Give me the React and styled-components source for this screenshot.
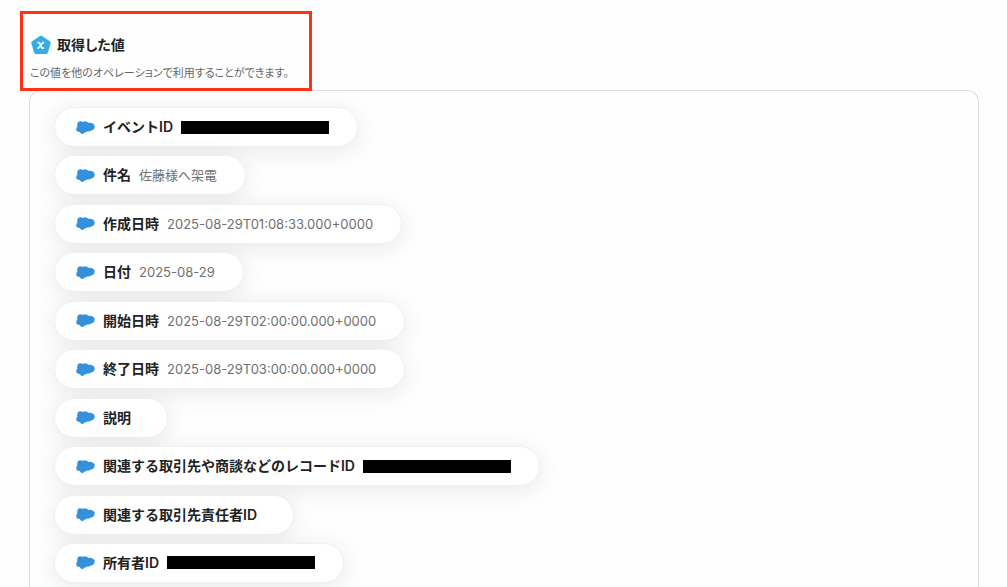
import React from "react";
import styled, { createGlobalStyle } from "styled-components";

const GlobalStyle = createGlobalStyle`
  *, *::before, *::after { box-sizing: border-box; }
  body {
    margin: 0;
    background: #fefefe;
    color: #222;
    font-family: Inter, "Noto Sans CJK JP", sans-serif;
    -webkit-font-smoothing: antialiased;
  }
`;

const Page = styled.main`
  display: flex;
  flex-direction: column;
  min-height: 100vh;
  padding: 11px 28px 0 20px;
`;

const Header = styled.header`
  position: relative;
  z-index: 1;
  align-self: flex-start;
  min-width: 292px;
  padding: 19px 8px 5px 7px;
  border: 3px solid #fa3319;
  font-feature-settings: "palt";
`;

const TitleRow = styled.div`
  display: flex;
  align-items: center;
  gap: 6px;
  padding-left: 1px;
`;

const Title = styled.h1`
  margin: 0;
  font-size: 14px;
  line-height: 24px;
  font-weight: 600;
`;

const Description = styled.p`
  margin: 6px 0 0;
  font-size: 11px;
  line-height: 20px;
  color: #666;
  white-space: nowrap;
`;

const Panel = styled.section`
  flex: 1;
  display: flex;
  margin: -1px 0 0 9px;
  padding: 16px 24px 4px;
  border: 1px solid #ddd;
  border-bottom: 0;
  border-radius: 12px 12px 0 0;
`;

const FieldList = styled.ul`
  flex: 1;
  display: flex;
  flex-direction: column;
  align-items: flex-start;
  justify-content: space-between;
  gap: 8px;
  margin: 0;
  padding: 0;
  list-style: none;
`;

const Pill = styled.li`
  display: flex;
  align-items: center;
  gap: 8px;
  height: 40px;
  padding: 0 28px 0 21px;
  border: 1px solid #f0f0f0;
  border-radius: 20px;
  background: #fff;
  box-shadow: 0 4px 24px rgba(0, 0, 0, 0.09);
  white-space: nowrap;
`;

const Label = styled.span`
  font-size: 14px;
  line-height: 22px;
  font-weight: 600;
`;

const Value = styled.span`
  font-size: 13px;
  line-height: 22px;
  color: #707070;
`;

const Redaction = styled.span`
  width: 148px;
  height: 13px;
  background: #000;
`;

const CloudSvg = styled.svg`
  flex: none;
  width: 19px;
  height: 13px;
`;

const BadgeSvg = styled.svg`
  flex: none;
  width: 20px;
  height: 20px;
`;

const fields = [
  { label: "イベントID", redacted: true },
  { label: "件名", value: "佐藤様へ架電" },
  { label: "作成日時", value: "2025-08-29T01:08:33.000+0000" },
  { label: "日付", value: "2025-08-29" },
  { label: "開始日時", value: "2025-08-29T02:00:00.000+0000" },
  { label: "終了日時", value: "2025-08-29T03:00:00.000+0000" },
  { label: "説明", value: "" },
  { label: "関連する取引先や商談などのレコードID", redacted: true },
  { label: "関連する取引先責任者ID", value: "" },
  { label: "所有者ID", redacted: true },
];

function CloudIcon() {
  return (
    <CloudSvg viewBox="0 0 19 13" aria-hidden="true">
      <path
        fill="#3290dc"
        d="M1.300 2.800C1.500 1.200 2.700.3 4.200.3c.8 0 1.500.2 2.100.7.6-.4 1.300-.5 2-.4.700-.2 1.700-.1 2.600.200.7.3 1.100.7 1.400 1.200.8-.3 1.800-.3 2.900 0 2 .4 3.500 1.600 3.500 3.400 0 2.200-1.500 3.900-3.800 4.200-.6.7-1.500 1-2.500.9-.5-.1-.9-.1-1.300.1-.8.600-1.600.900-2.400 1-.6.900-1.500 1.400-2.500 1.300-1.100-.1-1.900-.8-2.500-1.900C1.500 11 .2 9.900.2 8.200c0-1 .4-1.900 1.200-2.500C1.100 4.800 1.100 3.800 1.300 2.800z"
      />
    </CloudSvg>
  );
}

function VariableIcon() {
  return (
    <BadgeSvg viewBox="0 0 20 20" aria-hidden="true">
      <path
        fill="#35ace5"
        stroke="#35ace5"
        strokeWidth="4"
        strokeLinejoin="round"
        d="M10 2.700 17.700 7.900 15 17H5L2.300 7.900z"
      />
      <path
        fill="none"
        stroke="#fff"
        strokeWidth="1.7"
        d="M6.500 7.600h1c.6 0 .9.200 1.200.800l1.800 3.900c.3.600.6.900 1.200.900h1.200M13.200 7.600h-.4c-.7 0-1.200.3-1.600.800l-3 3.900c-.4.600-.8.900-1.500.900h-.3"
      />
    </BadgeSvg>
  );
}

export default function App() {
  return (
    <>
      <GlobalStyle />
      <Page lang="ja">
        <Header>
          <TitleRow>
            <VariableIcon />
            <Title>取得した値</Title>
          </TitleRow>
          <Description>この値を他のオペレーションで利用することができます。</Description>
        </Header>
        <Panel>
          <FieldList>
            {fields.map(({ label, value, redacted }) => (
              <Pill key={label}>
                <CloudIcon />
                <Label>{label}</Label>
                {redacted ? <Redaction /> : <Value>{value}</Value>}
              </Pill>
            ))}
          </FieldList>
        </Panel>
      </Page>
    </>
  );
}
